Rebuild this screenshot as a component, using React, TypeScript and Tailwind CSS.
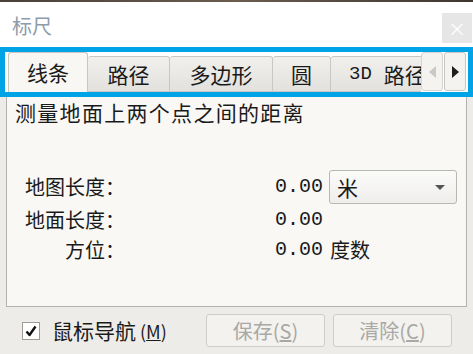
const cjk = "font-['Noto_Sans_CJK_SC','Noto_Sans',sans-serif]";
const mono = "font-['Liberation_Mono','DejaVu_Sans_Mono',monospace]";

const tabs = [
  { label: "线条", width: "w-[80px]" },
  { label: "路径", width: "w-[82px]" },
  { label: "多边形", width: "w-[103px]" },
  { label: "圆", width: "w-[58px]" },
];

function Tab({ label, width }: { label: string; width: string }) {
  return (
    <div
      className={`${width} h-[36px] shrink-0 flex items-center justify-center border border-[#c9c7c3] border-l-0 rounded-t-[3px] bg-gradient-to-b from-[#f1f0ed] to-[#e3e1dd] text-[21px] text-[#1a1a1a]`}
    >
      {label}
    </div>
  );
}

export default function App() {
  return (
    <div
      className={`relative w-[473px] h-[354px] overflow-hidden bg-white ${cjk} leading-none`}
    >
      <div className="h-[2px] bg-gradient-to-r from-[#4a4038] via-[#6b5c4e] to-[#3e3630]" />

      <div className="h-[45px] flex justify-between">
        <div className="pl-[12px] pt-[12px] text-[20px] leading-[24px] text-[#8d9cab]">
          标尺
        </div>
        <div className="mt-[11px] mr-[1px] w-[30px] h-[30px] bg-[#e6e6e6] flex items-center justify-center text-white text-[18px]">
          ×
        </div>
      </div>

      {/* tab strip, last tab runs under the scroll arrows */}
      <div className="h-[45px] pt-[5px] pl-[8px] flex items-end">
        <div className="w-[413px] h-[40px] flex items-end overflow-hidden">
          <div className="w-[80px] h-[40px] shrink-0 flex items-center justify-center border border-b-0 border-[#c9c7c3] rounded-t-[3px] bg-[#f8f7f3] text-[21px] text-[#1a1a1a]">
            线条
          </div>
          {tabs.slice(1).map((t) => (
            <Tab key={t.label} label={t.label} width={t.width} />
          ))}
          <div className="w-[110px] h-[36px] shrink-0 flex items-center pl-[18px] gap-[12px] border border-l-0 border-[#c9c7c3] rounded-t-[3px] bg-gradient-to-b from-[#f1f0ed] to-[#e3e1dd] text-[21px] text-[#1a1a1a]">
            <span className={`${mono} text-[19px]`}>3D</span>
            <span>路径</span>
          </div>
        </div>
        <div className="w-[22px] h-[39px] mb-[1px] flex items-center justify-center border border-[#d6d4d0] rounded-[3px] bg-[#f4f3f0]">
          <svg width="7" height="12" viewBox="0 0 7 12">
            <path d="M7 0 L0 6 L7 12 Z" fill="#c9c9c9" />
          </svg>
        </div>
        <div className="ml-[1px] w-[22px] h-[39px] mb-[1px] flex items-center justify-center border border-[#c9c7c3] rounded-[3px] bg-[#f4f3f0]">
          <svg width="7" height="12" viewBox="0 0 7 12">
            <path d="M0 0 L7 6 L0 12 Z" fill="#1e1e1e" />
          </svg>
        </div>
      </div>

      {/* body */}
      <div className="h-[262px] bg-[#eeece8] px-[6px] flex flex-col">
        <div className="h-[215px] border border-[#b4b2ae] bg-[#f9f8f5] pl-[8px] pt-[7px] text-[#1a1a1a]">
          <div className="text-[21px] leading-[24px] tracking-[1.3px]">
            测量地面上两个点之间的距离
          </div>

          <div className="mt-[46px] pl-[10px] text-[20px]">
            <div className="h-[34px] flex items-center">
              <div className="w-[100px] text-right">地图长度：</div>
              <div className={`ml-[150px] w-[48px] ${mono}`}>0.00</div>
              <div className="ml-[6px] w-[128px] h-[34px] border border-[#b9b7b3] rounded-[3px] bg-gradient-to-b from-[#fbfbfa] to-[#efeeeb] flex items-center justify-between pl-[7px] pr-[11px]">
                <span className="text-[21px]">米</span>
                <svg width="10" height="5" viewBox="0 0 10 5">
                  <path d="M0 0 L10 0 L5 5 Z" fill="#555" />
                </svg>
              </div>
            </div>
            <div className="h-[32px] flex items-center">
              <div className="w-[100px] text-right">地面长度：</div>
              <div className={`ml-[150px] w-[48px] ${mono}`}>0.00</div>
            </div>
            <div className="h-[28px] flex items-center">
              <div className="w-[100px] text-right">方位：</div>
              <div className={`ml-[150px] w-[48px] ${mono}`}>0.00</div>
              <div className="ml-[7px]">度数</div>
            </div>
          </div>
        </div>

        {/* footer */}
        <div className="h-[47px] flex items-center pl-[16px]">
          <div className="w-[18px] h-[18px] border border-[#9e9c98] bg-white flex items-center justify-center">
            <svg width="12" height="12" viewBox="0 0 12 12">
              <path
                d="M1.5 6.5 L4.5 10 L10.5 1.5"
                fill="none"
                stroke="#111"
                strokeWidth="2.4"
                strokeLinejoin="round"
              />
            </svg>
          </div>
          <div className="ml-[12px] w-[118px] text-[21px] text-[#1a1a1a] flex items-center">
            鼠标导航
            <span className="ml-[4px] text-[18px]">
              (<span className="underline">M</span>)
            </span>
          </div>
          <button className="ml-[36px] w-[119px] h-[33px] border border-[#cfcdc9] rounded-[3px] bg-[#f3f2ef] text-[20px] text-[#a9a8a5]">
            保存(<span className="underline">S</span>)
          </button>
          <button className="ml-[8px] w-[119px] h-[33px] border border-[#cfcdc9] rounded-[3px] bg-[#f3f2ef] text-[20px] text-[#a9a8a5]">
            清除(<span className="underline">C</span>)
          </button>
        </div>
      </div>

      {/* focus highlight around the tab strip */}
      <div className="absolute left-0 top-[47px] w-[473px] h-[50px] border-[5px] border-[#00a3e6] pointer-events-none" />
    </div>
  );
}
